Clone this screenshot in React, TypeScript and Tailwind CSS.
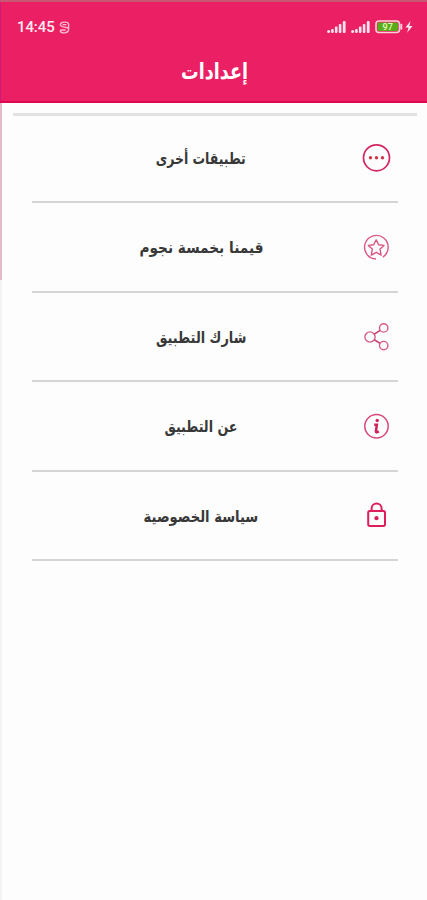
import React from "react";

type SettingsRowProps = {
	label: string;
	labelClassName: string;
	icon: React.ReactNode;
};

const MoreIcon = () => (
	<svg width="30" height="30" viewBox="0 0 30 30" fill="none">
		<circle cx="14.5" cy="14.8" r="13" stroke="#d32660" strokeWidth="1.7" />
		<circle cx="8.5" cy="14.8" r="1.7" fill="#cf3548" />
		<circle cx="14.5" cy="14.8" r="1.7" fill="#cf3548" />
		<circle cx="20.5" cy="14.8" r="1.7" fill="#cf3548" />
	</svg>
);

const RateIcon = () => (
	<svg width="30" height="30" viewBox="0 0 30 30" fill="none" stroke="#da5583" strokeWidth="1.4">
		<path d="M14 26A11.8 11.8 0 1 1 20.8 24.1" />
		<path
			d="M14.2 6.8l2.4 5 5.4.6-4 3.7 1.1 6-4.8-2.8-5 2.8 1-6-4-3.7 5.400-.6z"
			strokeLinejoin="round"
		/>
	</svg>
);

const ShareIcon = () => (
	<svg width="30" height="30" viewBox="0 0 30 30" fill="none" stroke="#d65a82" strokeWidth="1.4">
		<circle cx="8" cy="15" r="5.1" />
		<circle cx="21.7" cy="5.9" r="4.2" />
		<circle cx="21.7" cy="23.6" r="4.2" />
		<path d="M12.3 12.2l5.8-3.9M12.3 17.8l5.8 3.6" stroke="#cb3e6b" strokeWidth="1.6" />
	</svg>
);

const InfoIcon = () => (
	<svg width="30" height="30" viewBox="0 0 30 30" fill="none">
		<circle cx="14.5" cy="14.3" r="11.7" stroke="#d8497a" strokeWidth="1.5" />
		<circle cx="15.2" cy="8.5" r="1.7" fill="#cf2459" />
		<path d="M12.2 12.7h2.7l-1 6.6c0 1.2 1.4 1 2.9.1" stroke="#cf2459" strokeWidth="2.5" />
	</svg>
);

const LockIcon = () => (
	<svg width="30" height="30" viewBox="0 0 30 30" fill="none" stroke="#dc1f5b" strokeWidth="2">
		<rect x="6.2" y="10.1" width="16.8" height="14.8" rx="1.6" />
		<path d="M9.6 10V7.4a5 5 0 0 1 10 0V10" />
		<circle cx="14.5" cy="17.2" r="2.1" fill="#dc1f5b" stroke="none" />
	</svg>
);

const SignalIcon = () => (
	<svg width="19" height="14" viewBox="0 0 19 14" fill="#ffe3ee">
		<circle cx="1.6" cy="11.6" r="1.5" />
		<rect x="4.1" y="9" width="2.6" height="4" rx="1" />
		<rect x="7.9" y="6.6" width="2.6" height="6.4" rx="1" />
		<rect x="11.8" y="4" width="2.6" height="9" rx="1" />
		<rect x="15.8" y="1" width="2.8" height="12" rx="1" />
	</svg>
);

const ThemeIcon = () => (
	<svg width="11" height="13" viewBox="0 0 11 13" fill="none" stroke="#ffb9d2" strokeWidth="1.4">
		<path d="M1.2 3.4C2 .4 9 .4 9.6 3v5.4C9.4 12.800 1.6 12.900 1.2 9.300" />
		<path d="M1.2 3.200C1.400 7 7.200 5.300 9.400 7.400M3.400 3.600h4M1.200 9h5.400" />
	</svg>
);

const BatteryIcon = () => (
	<svg width="40" height="14" viewBox="0 0 40 14" fill="none">
		<rect x="1" y="1" width="23.5" height="11.5" rx="3" stroke="#ffd0d8" strokeWidth="1.6" />
		<rect x="2.6" y="2.6" width="20.3" height="8.3" rx="1.2" fill="#58ad19" />
		<path d="M26.3 4.8v4" stroke="#ffd0d8" strokeWidth="2" strokeLinecap="round" />
		<text
			x="12.7"
			y="10"
			fill="#e6fbc4"
			fontSize="9"
			fontWeight="500"
			textAnchor="middle"
			fontFamily="Roboto, sans-serif"
		>
			97
		</text>
		<path d="M35.600 1l-5.200 6.600h3.200l-1.500 5.200 5.500-6.800h-3.300z" fill="#ffe8f0" />
	</svg>
);

const StatusBar = () => (
	<div className="flex h-[54px] items-center justify-between pr-[12px] pl-[17px]">
		<div className="flex items-center gap-[4px]">
			<span className="font-['Roboto',sans-serif] text-[15px] leading-none font-medium tracking-[-0.1px] text-[#ffeaf2]">
				14:45
			</span>
			<ThemeIcon />
		</div>
		<div className="flex items-center gap-[5px]">
			<SignalIcon />
			<SignalIcon />
			<BatteryIcon />
		</div>
	</div>
);

const SettingsRow = (props: SettingsRowProps) => {
	const { label, labelClassName, icon } = props;

	return (
		<li className="flex h-[89.5px] items-center justify-between border-b-2 border-[#d5d5d5]">
			<div dir="rtl" className="w-[324px] pt-[3px] pl-[14px] text-center">
				<span
					className={`inline-block text-[16px] leading-6 font-bold whitespace-nowrap ${labelClassName}`}
				>
					{label}
				</span>
			</div>
			<span className="mt-[2px] mr-[6px] shrink-0">{icon}</span>
		</li>
	);
};

export default function App() {
	return (
		<div className="min-h-[900px] w-[427px] bg-[#fdfdfd] font-['DejaVu_Sans',sans-serif] text-[#383838]">
			<header className="relative h-[103px] border-t-2 border-b-2 border-t-[#c95673] border-b-[#df0750] bg-[#eb1f63] text-white">
				<div className="absolute top-0 left-0 h-[99px] w-px bg-[#d01a79]" />
				<div className="-mt-[2px]">
					<StatusBar />
				</div>
				<h1
					dir="rtl"
					className="ml-[2px] scale-x-[0.8] text-center text-[22px] leading-[36px] font-bold"
				>
					إعدادات
				</h1>
			</header>
			<div className="flex">
				<div className="h-[797px] w-[2px] shrink-0 bg-[#f5f2f5]">
					<div className="h-[177px] bg-[#e8b8cb]" />
				</div>
				<main className="flex-1 pt-[10px]">
					<div className="ml-[11px] h-[3px] w-[404px] bg-[#e2e2e2]" />
					<ul className="-mt-[2.5px] ml-[30px] w-[366px]">
						<SettingsRow label="تطبيقات أخرى" labelClassName="scale-x-[0.78]" icon={<MoreIcon />} />
						<SettingsRow label="قيمنا بخمسة نجوم" labelClassName="scale-x-[0.855]" icon={<RateIcon />} />
						<SettingsRow label="شارك التطبيق" labelClassName="scale-x-[0.805]" icon={<ShareIcon />} />
						<SettingsRow label="عن التطبيق" labelClassName="scale-x-[0.795]" icon={<InfoIcon />} />
						<SettingsRow label="سياسة الخصوصية" labelClassName="scale-x-[0.82]" icon={<LockIcon />} />
					</ul>
				</main>
			</div>
		</div>
	);
}
